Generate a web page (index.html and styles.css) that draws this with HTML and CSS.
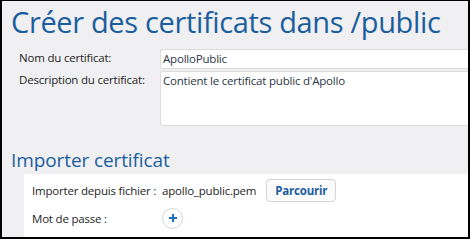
FILE: index.html
```html
<!DOCTYPE html>
<html lang="fr">
<head>
  <meta charset="UTF-8" />
  <title>Créer des certificats</title>
  <link rel="stylesheet" href="styles.css">
</head>
<body>
  <div class="frame">
    <h1>Créer des certificats dans /public</h1>
    <div class="form">
      <label>Nom du certificat:</label>
      <div class="field">ApolloPublic</div>
      <label>Description du certificat:</label>
      <div class="field area">Contient le certificat public d'Apollo</div>
    </div>
    <h2>Importer certificat</h2>
    <div class="panel">
      <div class="row">
        <span class="lbl">Importer depuis fichier :</span>
        <span class="file">apollo_public.pem</span>
        <button class="browse">Parcourir</button>
      </div>
      <div class="row">
        <span class="lbl">Mot de passe :</span>
        <span class="plus">
          <svg width="10" height="10" viewBox="0 0 10 10"><path d="M5 1v8M1 5h8" stroke="#1a6fc0" stroke-width="2"/></svg>
        </span>
      </div>
    </div>
  </div>
</body>
</html>
```

FILE: styles.css
```css
body {
  margin: 0;
  background: #fff;
  font-family: "Open Sans", sans-serif;
}
.frame {
  width: 466px;
  height: 236px;
  border: 2px solid #000;
  border-top-width: 1px;
  background: #f0f0f2;
  overflow: hidden;
}
h1 {
  margin: 0;
  padding: 2px 0 0 9px;
  font-weight: normal;
  font-size: 29px;
  letter-spacing: -0.35px;
  line-height: 38px;
  color: #1b5e9e;
  white-space: nowrap;
}
.form {
  display: grid;
  grid-template-columns: 141px 1fr;
  row-gap: 2px;
  padding: 8px 0 0 17px;
  font-size: 11.5px;
  letter-spacing: -0.2px;
  color: #1e1e1e;
}
.form label {
  line-height: 18px;
  white-space: nowrap;
}
.field {
  background: #fff;
  border: 1px solid #dcdcdc;
  border-right: none;
  border-radius: 3px 0 0 3px;
  height: 18px;
  line-height: 18px;
  padding-left: 2px;
  color: #2b3645;
}
.field.area {
  height: 53px;
}
h2 {
  margin: 0;
  padding: 20px 0 0 9px;
  font-weight: normal;
  font-size: 19px;
  letter-spacing: -0.1px;
  line-height: 28px;
  color: #1b5e9e;
}
.panel {
  margin: 0 0 0 22px;
  background: #fff;
  padding: 2px 0 0 8px;
  height: 62px;
  font-size: 11.5px;
  letter-spacing: -0.2px;
  color: #1e1e1e;
}
.row {
  display: flex;
  align-items: center;
  height: 28px;
}
.lbl {
  width: 130px;
  white-space: nowrap;
}
.file {
  margin-right: 10px;
}
.browse {
  font-family: inherit;
  font-size: 11.5px;
  letter-spacing: -0.2px;
  font-weight: bold;
  color: #1b5e9e;
  background: #fbfbfb;
  border: 1px solid #d4d4d4;
  border-radius: 4px;
  width: 70px;
  height: 23px;
  padding: 0;
}
.plus {
  display: flex;
  align-items: center;
  justify-content: center;
  width: 19px;
  height: 19px;
  border: 1px solid #d4d4d4;
  border-radius: 50%;
  background: #fff;
}
```
